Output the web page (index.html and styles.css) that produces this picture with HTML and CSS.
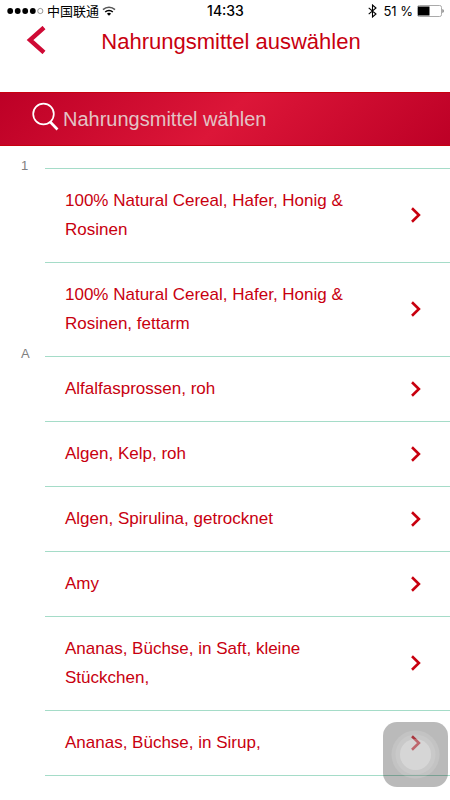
FILE: index.html
```html
<!DOCTYPE html>
<html lang="de">
<head>
<meta charset="utf-8">
<meta name="viewport" content="width=device-width, initial-scale=1">
<title>Nahrungsmittel auswählen</title>
<link rel="stylesheet" href="styles.css">
</head>
<body>
<svg width="0" height="0" class="sprite" aria-hidden="true">
  <symbol id="chevron" viewBox="0 0 10 16"><path d="M1 1.300 7.900 8 1 14.700" fill="none" stroke="currentColor" stroke-width="2.600"/></symbol>
</svg>
<div class="status">
  <div class="status-left">
    <svg width="37" height="8" viewBox="0 0 37 8" aria-hidden="true">
      <g fill="#000"><circle cx="3.200" cy="4" r="2.900"/><circle cx="10.700" cy="4" r="2.900"/><circle cx="18.200" cy="4" r="2.900"/><circle cx="25.800" cy="4" r="2.900"/></g>
      <circle cx="33.300" cy="4" r="2.600" fill="none" stroke="#555" stroke-width=".6"/>
    </svg>
    <span>中国联通</span>
    <svg width="14" height="10" viewBox="0 0 14 10" fill="none" stroke="#000" stroke-width="1.500" aria-hidden="true">
      <path d="M1 3.600a8.600 8.600 0 0 1 12 0" stroke="#555"/><path d="M3.200 6a5.500 5.500 0 0 1 7.600 0"/><path d="M4.900 7.700a3 3 0 0 1 4.200 0L7 9.800z" fill="#000" stroke="none"/>
    </svg>
  </div>
  <time class="clock">14:33</time>
  <div class="status-right">
    <svg width="9" height="14" viewBox="0 0 9 14" fill="none" stroke="#000" stroke-width="1.100" aria-hidden="true"><path d="M.7 3.800 8 10 4.500 13V1L8 4 .7 10.200"/></svg>
    <span>51 %</span>
    <svg width="27" height="12" viewBox="0 0 27 12" aria-hidden="true"><rect x=".5" y=".5" width="24" height="11" rx="1.800" fill="#fff" stroke="#aaa"/><path d="M1 1.500h11.500v9H1z"/><path d="M25.500 4v4q1.200-.5 1.200-2t-1.200-2" fill="#555"/></svg>
  </div>
</div>
<header class="header">
  <button class="back" type="button" aria-label="Zurück">
    <svg width="20" height="28" viewBox="0 0 20 28" aria-hidden="true"><path d="M18 1.500 4 14l14 12.500" fill="none" stroke="#cf0a35" stroke-width="4.400"/></svg>
  </button>
  <h1>Nahrungsmittel auswählen</h1>
</header>
<form class="search">
  <label for="q" aria-label="Suche">
    <svg width="27" height="29" viewBox="0 0 27 29" fill="none" stroke="#fff" aria-hidden="true"><circle cx="11.500" cy="12" r="10.300" stroke-width="1.700"/><path d="m18.300 20 7.200 7.500" stroke-width="2.600"/></svg>
  </label>
  <input id="q" type="text" placeholder="Nahrungsmittel wählen">
</form>
<main>
  <section class="group">
    <h2>1</h2>
    <ul>
      <li><a href="#"><span>100% Natural Cereal, Hafer, Honig &amp; Rosinen</span><svg class="go"><use href="#chevron"/></svg></a></li>
      <li><a href="#"><span>100% Natural Cereal, Hafer, Honig &amp; Rosinen, fettarm</span><svg class="go"><use href="#chevron"/></svg></a></li>
    </ul>
  </section>
  <section class="group">
    <h2>A</h2>
    <ul>
      <li><a href="#"><span>Alfalfasprossen, roh</span><svg class="go"><use href="#chevron"/></svg></a></li>
      <li><a href="#"><span>Algen, Kelp, roh</span><svg class="go"><use href="#chevron"/></svg></a></li>
      <li><a href="#"><span>Algen, Spirulina, getrocknet</span><svg class="go"><use href="#chevron"/></svg></a></li>
      <li><a href="#"><span>Amy</span><svg class="go"><use href="#chevron"/></svg></a></li>
      <li><a href="#"><span>Ananas, Büchse, in Saft, kleine Stückchen,</span><svg class="go"><use href="#chevron"/></svg></a></li>
      <li><a href="#"><span>Ananas, Büchse, in Sirup,</span><svg class="go"><use href="#chevron"/></svg></a></li>
    </ul>
  </section>
</main>
<button class="assist" type="button" aria-label="AssistiveTouch">
  <svg width="65" height="65" viewBox="0 0 65 65" fill="#fff" aria-hidden="true"><circle cx="32.500" cy="32.500" r="24" fill-opacity=".12"/><circle cx="32.500" cy="32.500" r="20" fill-opacity=".1"/><circle cx="32.500" cy="32.500" r="15.500" fill-opacity=".25"/></svg>
</button>
</body>
</html>
```
FILE: styles.css
```css
* { box-sizing: border-box; }
body {
  margin: 0;
  background: #fff;
  color: #c8000f;
  font-family: "Liberation Sans", "Noto Sans CJK SC", sans-serif;
}
.sprite { position: absolute; }
.status {
  display: grid;
  grid-template-columns: 1fr auto 1fr;
  align-items: center;
  height: 22px;
  padding: 0 6px 0 7px;
  color: #000;
  font: 13px/22px Inter, "Noto Sans CJK SC", sans-serif;
}
.status-left, .status-right { display: flex; align-items: center; gap: 4px; }
.status-left { gap: 3px; }
.status-right { justify-content: flex-end; }
.status-right span { margin-left: 2px; }
.clock { font-size: 14px; font-weight: 500; }
.header {
  display: grid;
  grid-template-columns: 58px 1fr 46px;
  align-items: center;
  height: 70px;
  padding: 0 0 30px;
}
.back {
  display: flex;
  justify-content: flex-start;
  padding: 0 0 4px 26px;
  border: 0;
  background: none;
}
h1 {
  margin: 0;
  font-size: 22px;
  line-height: 40px;
  font-weight: 400;
  text-align: center;
  white-space: nowrap;
}
.search {
  display: flex;
  align-items: center;
  gap: 4px;
  height: 54px;
  padding: 0 32px;
  border-top: 1px solid #c8000f;
  border-bottom: 1px solid #c8000f;
  background: linear-gradient(135deg, #bd0026, #dc1638 50%, #bd0026);
}
.search label { display: flex; margin-bottom: 6px; }
.search input {
  flex: 1;
  min-width: 0;
  padding: 0;
  border: 0;
  outline: 0;
  background: none;
  color: #fff;
  font: 20px/28px "Liberation Sans", sans-serif;
}
.search input::placeholder { color: #e3c3c5; opacity: 1; }
main { padding-top: 22px; }
.group { display: grid; grid-template-columns: 45px 1fr; }
h2 {
  margin: -10px 0 0;
  padding-left: 21px;
  color: #808080;
  font-size: 13px;
  line-height: 16px;
  font-weight: 400;
}
ul { margin: 0; padding: 0; list-style: none; }
li { border-top: 1px solid #a5dcc8; }
.group:last-child li:last-child { border-bottom: 1px solid #a5dcc8; }
li a {
  display: flex;
  align-items: center;
  justify-content: space-between;
  gap: 50px;
  padding: 17px 29px 18px 20px;
  color: inherit;
  font-size: 17px;
  line-height: 29px;
  text-decoration: none;
}
.go { flex: none; width: 10px; height: 16px; }
.assist {
  position: fixed;
  right: 2px;
  bottom: 13px;
  width: 65px;
  height: 65px;
  padding: 0;
  border: 0;
  border-radius: 14px;
  background: rgba(0, 0, 0, .27);
}
.assist svg { display: block; }
```
